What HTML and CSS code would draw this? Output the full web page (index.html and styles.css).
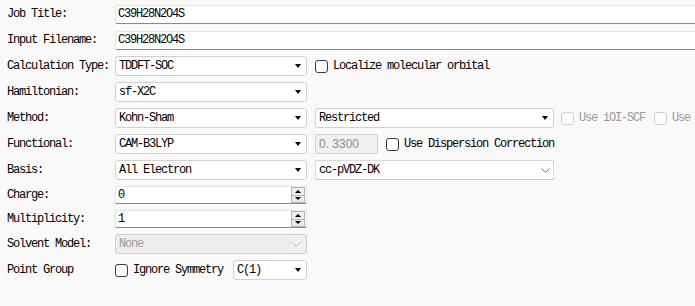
FILE: index.html
```html
<!DOCTYPE html>
<html lang="en">
<head>
    <meta charset="UTF-8">
    <title>Job Setup</title>
    <link rel="stylesheet" href="styles.css">
</head>
<body>
    <div class="form">
        <div class="row">
            <label class="label">Job Title:</label>
            <input class="text wide" type="text" value="C39H28N2O4S">
        </div>
        <div class="row">
            <label class="label">Input Filename:</label>
            <input class="text wide" type="text" value="C39H28N2O4S">
        </div>
        <div class="row">
            <label class="label">Calculation Type:</label>
            <div class="combo main"><span>TDDFT-SOC</span><span class="arrow"></span></div>
            <span class="check"></span>
            <span class="check-text">Localize molecular orbital</span>
        </div>
        <div class="row">
            <label class="label">Hamiltonian:</label>
            <div class="combo main"><span>sf-X2C</span><span class="arrow"></span></div>
        </div>
        <div class="row">
            <label class="label">Method:</label>
            <div class="combo main"><span>Kohn-Sham</span><span class="arrow"></span></div>
            <div class="combo second"><span>Restricted</span><span class="arrow"></span></div>
            <span class="check disabled"></span>
            <span class="check-text disabled">Use iOI-SCF</span>
            <span class="check disabled"></span>
            <span class="check-text disabled">Use</span>
        </div>
        <div class="row">
            <label class="label">Functional:</label>
            <div class="combo main"><span>CAM-B3LYP</span><span class="arrow"></span></div>
            <div class="num-field">0. 3300</div>
            <span class="check"></span>
            <span class="check-text">Use Dispersion Correction</span>
        </div>
        <div class="row">
            <label class="label">Basis:</label>
            <div class="combo main"><span>All Electron</span><span class="arrow"></span></div>
            <div class="combo second flat"><span>cc-pVDZ-DK</span>
                <svg class="chevron" width="9" height="5" viewBox="0 0 9 5"><path d="M0.5 0.5 L4.5 4.5 L8.5 0.5" fill="none" stroke="#777" stroke-width="1"/></svg>
            </div>
        </div>
        <div class="row short">
            <label class="label">Charge:</label>
            <div class="spin">
                <span class="spin-value">0</span>
                <div class="spin-btns"><span class="up"></span><span class="down"></span></div>
            </div>
        </div>
        <div class="row short">
            <label class="label">Multiplicity:</label>
            <div class="spin">
                <span class="spin-value">1</span>
                <div class="spin-btns"><span class="up"></span><span class="down"></span></div>
            </div>
        </div>
        <div class="row">
            <label class="label">Solvent Model:</label>
            <div class="combo main off"><span class="off-text">None</span>
                <svg class="chevron" width="9" height="5" viewBox="0 0 9 5"><path d="M0.5 0.5 L4.5 4.5 L8.5 0.5" fill="none" stroke="#bbb" stroke-width="1"/></svg>
            </div>
        </div>
        <div class="row">
            <label class="label">Point Group</label>
            <span class="check first"></span>
            <span class="check-text">Ignore Symmetry</span>
            <div class="combo small"><span>C(1)</span><span class="arrow"></span></div>
        </div>
    </div>
</body>
</html>
```

FILE: styles.css
```css
body {
    margin: 0;
    background-color: #f9f9f9;
    font-family: "Liberation Mono", monospace;
    font-size: 12px;
    letter-spacing: -1.2px;
    color: #000;
    overflow: hidden;
}
.form {
    padding: 1px 0 0 7px;
}
.row {
    display: flex;
    align-items: center;
    height: 26px;
    white-space: nowrap;
}
.row.short {
    height: 24px;
}
.label {
    width: 108px;
    flex-shrink: 0;
}
.text {
    box-sizing: border-box;
    height: 19px;
    margin: 0;
    padding: 0 2px;
    border: 1px solid #e6e6e6;
    border-bottom-color: #8a8a8a;
    border-radius: 2px 0 0 2px;
    background-color: #fff;
    font: inherit;
    letter-spacing: inherit;
    color: #000;
    outline: none;
}
.wide {
    width: calc(100vw - 115px);
    border-right: none;
    flex-shrink: 0;
}
.combo {
    box-sizing: border-box;
    display: flex;
    align-items: center;
    justify-content: space-between;
    height: 20px;
    padding: 0 5px 0 3px;
    border: 1px solid #d0d0d0;
    border-radius: 3px;
    background-color: #fff;
    flex-shrink: 0;
}
.combo.main {
    width: 192px;
}
.combo.second {
    width: 239px;
    margin-left: 8px;
}
.combo.flat {
    border-radius: 0;
    border-color: #d9d9d9;
    border-bottom-color: #c4c4c4;
    padding-right: 3px;
}
.combo.small {
    width: 74px;
    margin-left: 10px;
}
.combo.off {
    background-color: #f0f0f0;
    border-color: #cccccc;
    padding: 1px 5px 1px 1px;
    align-items: stretch;
}
.off-text {
    display: flex;
    align-items: center;
    width: 172px;
    padding-left: 2px;
    background-color: #ececec;
    color: #a0a0a0;
}
.combo.off .chevron {
    align-self: center;
}
.arrow {
    width: 0;
    height: 0;
    border-left: 3.5px solid transparent;
    border-right: 3.5px solid transparent;
    border-top: 4px solid #000;
}
.check {
    box-sizing: border-box;
    width: 13px;
    height: 13px;
    margin: 0 5px 0 8px;
    border: 1px solid #3c3c3c;
    border-radius: 3px;
    background-color: #fdfdfd;
    flex-shrink: 0;
}
.check.first {
    margin-left: 0;
}
.check.disabled {
    border-color: #cfcfcf;
    margin-left: 7px;
}
.check-text.disabled {
    color: #9a9a9a;
    margin-right: 2px;
}
.num-field {
    box-sizing: border-box;
    width: 63px;
    height: 20px;
    margin-left: 8px;
    padding: 2px 0 0 3px;
    border: 1px solid #d3d3d3;
    border-radius: 2px;
    background-color: #f0f0f0;
    font-family: "Liberation Sans", sans-serif;
    letter-spacing: 0;
    color: #8c8c8c;
}
.spin {
    box-sizing: border-box;
    display: flex;
    align-items: center;
    justify-content: space-between;
    width: 192px;
    height: 18px;
    padding: 0 1px 0 2px;
    border: 1px solid #e6e6e6;
    border-bottom-color: #8a8a8a;
    background-color: #fff;
    flex-shrink: 0;
}
.spin-btns {
    display: flex;
    flex-direction: column;
    width: 14px;
    height: 16px;
}
.spin-btns span {
    box-sizing: border-box;
    flex: 1;
    display: flex;
    align-items: center;
    justify-content: center;
    border: 1px solid #b5b5b5;
    background-color: #ececec;
}
.spin-btns .up::after {
    content: "";
    border-left: 3px solid transparent;
    border-right: 3px solid transparent;
    border-bottom: 3px solid #000;
}
.spin-btns .down {
    border-top: none;
}
.spin-btns .down::after {
    content: "";
    border-left: 3px solid transparent;
    border-right: 3px solid transparent;
    border-top: 3px solid #000;
}
```
